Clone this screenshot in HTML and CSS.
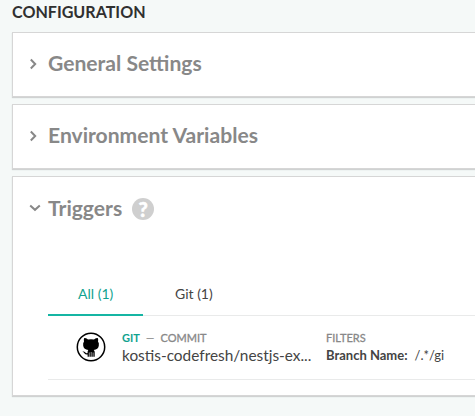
FILE: index.html
```html
<!DOCTYPE html>
<html lang="en">
<head>
<meta charset="utf-8">
<title>Configuration</title>
<link rel="stylesheet" href="styles.css">
</head>
<body>
<main class="page">
  <h1 class="page-title">CONFIGURATION</h1>
  <section class="card">
    <header class="card-head">
      <svg class="chevron" viewBox="0 0 14 14"><path d="M2.8 2.5 7.2 7 2.8 11.5"/></svg>
      <h2>General Settings</h2>
    </header>
  </section>
  <section class="card">
    <header class="card-head">
      <svg class="chevron" viewBox="0 0 14 14"><path d="M2.8 2.5 7.2 7 2.8 11.5"/></svg>
      <h2>Environment Variables</h2>
    </header>
  </section>
  <section class="card card-open">
    <header class="card-head">
      <svg class="chevron" viewBox="0 0 14 14"><path d="M2.2 4.4 7 8.8 11.8 4.4"/></svg>
      <h2>Triggers</h2>
      <span class="help">?</span>
    </header>
    <div class="triggers">
      <nav class="tabs">
        <a class="tab tab-active">All (1)</a>
        <a class="tab">Git (1)</a>
      </nav>
      <div class="trigger">
        <svg class="logo" viewBox="0 0 30 30">
          <circle cx="15" cy="15" r="13.7" fill="#fff" stroke="#000" stroke-width="1.5"/>
          <path d="M8.2 6.1Q10 6 12 7.5Q15 6.9 18 7.5Q20 6 21.8 6.1Q22.5 8 22 9.6Q23.3 11.2 22.8 13.7Q22.2 17.4 17.7 18.1Q18.7 19 18.7 20V24.8H11.6V22.4Q9.4 22.7 8.4 21.2Q7.7 20 6.4 19.5Q8.3 19 9.4 20.6Q10.1 21.5 11.6 21V20Q11.6 19 12.3 18.1Q7.8 17.4 7.2 13.7Q6.8 11.2 8 9.6Q7.5 8 8.2 6.1Z"/>
          <path d="M13.3 20.5V25M15.2 20V25M17.1 20.5V25" stroke="#fff" stroke-width=".6"/>
        </svg>
        <div class="source">
          <div class="label"><b class="git">GIT</b><span class="dash">—</span><span>COMMIT</span></div>
          <div class="repo">kostis-codefresh/nestjs-ex...</div>
        </div>
        <div class="filters">
          <div class="label">FILTERS</div>
          <div class="filter"><b>Branch Name:</b><span>/.*/gi</span></div>
        </div>
      </div>
    </div>
  </section>
</main>
</body>
</html>
```
FILE: styles.css
```css
* { box-sizing: border-box; }
body {
  margin: 0;
  background: #f5f9f8;
  font-family: Lato, sans-serif;
  color: #444;
  overflow: hidden;
}
.page { padding-left: 12px; }
.page-title {
  margin: 0;
  height: 32px;
  padding-top: 2px;
  font-size: 16.1px;
  line-height: 19px;
  font-weight: 700;
  color: #303030;
}
.card {
  height: 65px;
  margin-bottom: 7px;
  background: #fff;
  border: 1px solid #d6d6d6;
  border-right: 0;
  box-shadow: 0 1px 1px #d0d2d2;
}
.card-open { height: 220px; }
.card-head {
  display: flex;
  align-items: center;
  height: 62px;
  padding-left: 15px;
}
.card-head h2 {
  margin: 0 0 0 6px;
  padding-bottom: 2px;
  font-size: 21.1px;
  line-height: 28px;
  font-weight: 700;
  color: #888;
}
.card-open .card-head h2 { padding-bottom: 1px; }
.chevron {
  width: 14px;
  height: 14px;
  fill: none;
  stroke: #888;
  stroke-width: 2;
}
.help {
  width: 22px;
  height: 22px;
  margin: 2px 0 0 10px;
  border-radius: 50%;
  background: #cfcfcf;
  color: #fff;
  font-size: 20px;
  line-height: 22px;
  font-weight: 900;
  text-align: center;
  -webkit-text-stroke: .5px #fff;
}
.triggers { margin: 35px 0 0 35px; }
.tabs {
  display: flex;
  height: 42px;
  border-bottom: 1px solid #e9eaea;
}
.tab {
  width: 95px;
  height: 42px;
  padding-left: 30px;
  font-size: 14px;
  line-height: 40px;
}
.tab + .tab { padding-left: 32px; }
.tab-active { color: #11a38f; border-bottom: 2px solid #15b5a3; }
.trigger {
  display: flex;
  height: 64px;
  padding: 15px 0 0 28px;
  border-bottom: 1px solid #e9eaea;
}
.logo { width: 30px; height: 30px; margin-top: 1px; }
.source { width: 204px; margin-left: 16px; }
.label {
  display: flex;
  margin-bottom: 2px;
  font-size: 11px;
  line-height: 13px;
  color: #888;
  -webkit-text-stroke: .3px #888;
}
.git { color: #11a38f; -webkit-text-stroke: 0; }
.dash { margin: 0 6px; -webkit-text-stroke: 0; }
.repo { font-size: 15.4px; line-height: 19px; white-space: nowrap; }
.filter {
  display: flex;
  gap: 7px;
  font-size: 13px;
  line-height: 19px;
  white-space: nowrap;
}
```
